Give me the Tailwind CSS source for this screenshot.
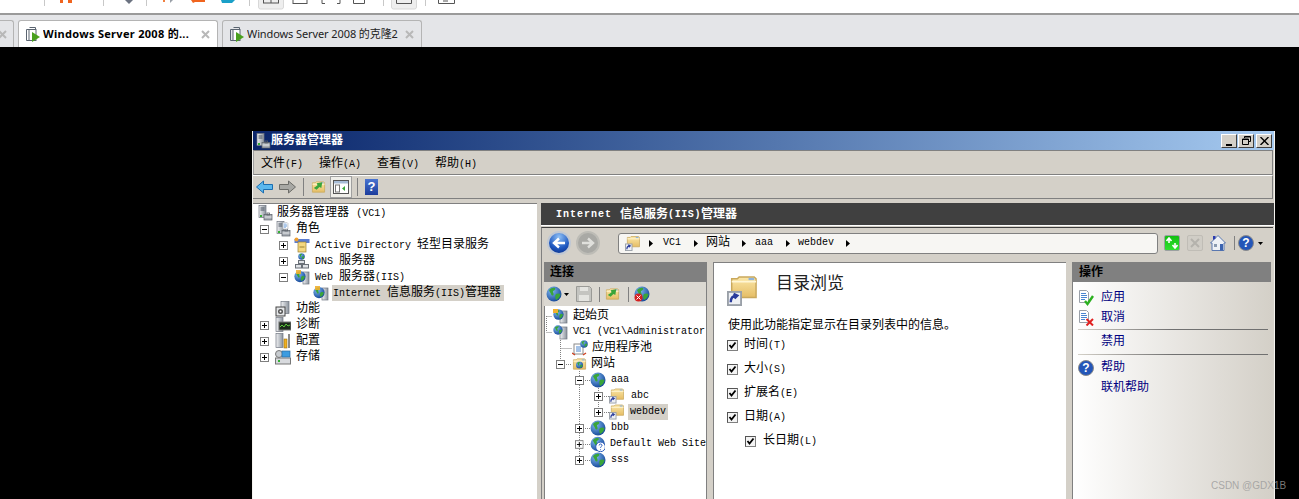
<!DOCTYPE html>
<html lang="zh-CN">
  <head>
    <meta charset="UTF-8" />
    <title>服务器管理器</title>
    <script src="https://cdn.jsdelivr.net/npm/@tailwindcss/browser@4"></script>
  </head>
  <body class="relative w-[1299px] h-[499px] overflow-hidden bg-black flex flex-col font-['Liberation_Mono','Noto_Sans_CJK_SC',monospace] text-[12px] leading-4 text-black">
    <!-- shared icons -->
    <svg class="absolute w-0 h-0" width="0" height="0">
      <defs>
        <linearGradient id="fold" x1="0" y1="0" x2="0" y2="1"><stop offset="0" stop-color="#fbe7a8" /><stop offset="1" stop-color="#e5bd65" /></linearGradient>
        <radialGradient id="ball" cx="0.35" cy="0.3" r="0.8"><stop offset="0" stop-color="#7fb8f0" /><stop offset="1" stop-color="#0d3f92" /></radialGradient>
        <linearGradient id="tower" x1="0" y1="0" x2="1" y2="0"><stop offset="0" stop-color="#f2f3f5" /><stop offset="1" stop-color="#8a929c" /></linearGradient>
      </defs>
      <symbol id="plus" viewBox="0 0 9 9"><rect x="0.5" y="0.5" width="8" height="8" fill="#fff" stroke="#7f7f7f" /><path d="M2 4.5h5M4.5 2v5" stroke="#000" /></symbol>
      <symbol id="minus" viewBox="0 0 9 9"><rect x="0.5" y="0.5" width="8" height="8" fill="#fff" stroke="#7f7f7f" /><path d="M2 4.5h5" stroke="#000" /></symbol>
      <symbol id="server" viewBox="0 0 16 16"><rect x="2" y="0.5" width="7" height="12" fill="url(#tower)" stroke="#6f7680" stroke-width="0.7" /><path d="M3.5 3h4M3.5 5h4" stroke="#4b5563" /><rect x="3" y="10" width="2" height="2" fill="#35b034" /><rect x="7" y="9.5" width="8" height="5.5" fill="#a8adb4" stroke="#5b6068" stroke-width="0.7" /><rect x="10" y="8" width="2.5" height="2" fill="none" stroke="#5b6068" stroke-width="0.8" /><path d="M7.5 12h7" stroke="#e8eaec" /></symbol>
      <symbol id="globe" viewBox="0 0 16 16"><circle cx="8" cy="8" r="7.5" fill="url(#ball)" /><path d="M3 4c2-2 4-2.500 6-2 1 1-.5 2.500-2 3-.5 1.500 1 2 .5 4-1 1-2 .5-2.500-1C4.500 6.500 3.500 6 3 4zM10 8c1.500-1 3.500-.5 4.500 0-.5 3-2 5-4.500 6-.5-1.500-1.500-4 0-6z" fill="#3aa53a" /></symbol>
      <symbol id="folder" viewBox="0 0 16 16"><path d="M1.500 3.500h3l1-1h8l1 1v10h-13z" fill="url(#fold)" stroke="#c9a85c" stroke-width="0.8" /><path d="M1.500 5h13" stroke="#fff6d4" /><rect x="10.500" y="3" width="3" height="1.200" fill="#8fb4dc" /></symbol>
      <symbol id="shortcut" viewBox="0 0 16 16"><use href="#folder" x="1" y="-2" width="16" height="16" /><rect x="0.500" y="8.500" width="7" height="7" fill="#eef0f4" stroke="#9aa0a8" /><path d="M2 14c0-2 1-3.500 3-3.500M3.500 9.500l2 1-1.500 1.500" fill="none" stroke="#2a3c9c" stroke-width="1.300" /></symbol>
      <symbol id="doc" viewBox="0 0 16 16"><path d="M1.500 .5h7l2 2v10h-9z" fill="#fff" stroke="#9aa0a8" /><path d="M3 3.500h5M3 5.500h6M3 7.500h6M3 9.500h4" stroke="#4a86d0" /></symbol>
    </svg>

    <!-- cropped workstation toolbar -->
    <svg class="block shrink-0" width="1299" height="15" viewBox="0 0 1299 15">
      <rect width="1299" height="15" fill="#fff" />
      <rect y="13" width="1299" height="2" fill="#9a9a9a" />
      <g fill="#c8c8c8"><rect x="44" width="1" height="6" /><rect x="103" width="1" height="6" /><rect x="146" width="1" height="6" /><rect x="249" width="1" height="6" /><rect x="383" width="1" height="6" /><rect x="425" width="1" height="6" /></g>
      <path d="M60 0h3v3h-3zM68 0h4v3h-4z" fill="#f0641e" />
      <path d="M125 0h8l-4 4z" fill="#6b7280" />
      <path d="M163 0h2v2h-2z" fill="#f08040" /><path d="M170 0v3l3-3z" fill="#9aa0a8" />
      <path d="M191 0h14v2h-10l-2 1z" fill="#f0641e" />
      <path d="M221 0l1 3h10l3-3z" fill="#1aa0c8" />
      <rect x="258.500" y="-4" width="25" height="13" rx="2" fill="#eeeeee" stroke="#d8d8d8" />
      <rect x="263.500" y="-3" width="15" height="6" fill="none" stroke="#555" /><path d="M271 0v3" stroke="#555" />
      <path d="M293 3.500h14M293 0v4M307 0v4" fill="none" stroke="#555" />
      <path d="M322 0v3.500h3M340 0v3.500h-3" fill="none" stroke="#555" />
      <path d="M353.500 0v3.500h11V0" fill="none" stroke="#555" />
      <rect x="391.500" y="-4" width="25" height="13" rx="2" fill="#eeeeee" stroke="#d8d8d8" />
      <path d="M396.500 0v3.500h15V0" fill="none" stroke="#555" />
      <path d="M438.500 0v3.500h16V0M443 1h5" fill="none" stroke="#555" />
    </svg>

    <!-- tab strip -->
    <div class="h-[32px] shrink-0 bg-[#e4e5e8] flex items-end font-['Noto_Sans','Noto_Sans_CJK_SC',sans-serif] text-[11px]">
      <div class="w-[14px] h-[27px] border border-l-0 border-b-0 border-[#b4b4b4] rounded-tr-[3px] flex items-center justify-start">
        <svg class="-ml-[2px] w-[9px] h-[9px]" viewBox="0 0 9 9"><path d="M1 1l7 7M8 1l-7 7" stroke="#b8b8b8" stroke-width="2" /></svg>
      </div>
      <div class="ml-[4px] w-[200px] h-[27px] bg-white border border-b-0 border-[#b4b4b4] rounded-t-[3px] flex items-center pl-[5px] font-bold">
        <svg class="w-4 h-4 shrink-0" viewBox="0 0 16 16"><path d="M5.500 1.500h6v2M2.500 3.500h6v11h-6z" fill="none" stroke="#5a6470" /><rect x="5" y="3.500" width="7" height="11" fill="#fff" stroke="#5a6470" /><path d="M8 6l8 5-8 5z" fill="#4aa01e" /></svg>
        <span class="ml-[3px] w-[157px] whitespace-nowrap overflow-hidden tracking-[0.3px]">Windows Server 2008 的...</span>
        <svg class="ml-[1px] w-[9px] h-[9px]" viewBox="0 0 9 9"><path d="M1 1l7 7M8 1l-7 7" stroke="#b8b8b8" stroke-width="2" /></svg>
      </div>
      <div class="ml-[4px] w-[200px] h-[27px] border border-b-0 border-[#b4b4b4] rounded-t-[3px] flex items-center pl-[5px] text-[#222]">
        <svg class="w-4 h-4 shrink-0" viewBox="0 0 16 16"><path d="M5.500 1.500h6v2M2.500 3.500h6v11h-6z" fill="none" stroke="#5a6470" /><rect x="5" y="3.500" width="7" height="11" fill="#fff" stroke="#5a6470" /><path d="M8 6l8 5-8 5z" fill="#4aa01e" /></svg>
        <span class="ml-[3px] w-[157px] whitespace-nowrap overflow-hidden tracking-[-0.1px]">Windows Server 2008 的克隆2</span>
        <svg class="ml-[1px] w-[9px] h-[9px]" viewBox="0 0 9 9"><path d="M1 1l7 7M8 1l-7 7" stroke="#b8b8b8" stroke-width="2" /></svg>
      </div>
    </div>

    <!-- guest desktop -->
    <div class="relative flex-1 bg-black">
      <div class="absolute left-[252px] top-[84px] w-[1023px] h-[368px] bg-[#d4d0c8] border-x border-x-[#f4f3ef] flex flex-col">
        <!-- title bar -->
        <div class="h-[19px] shrink-0 bg-gradient-to-r from-[#0a246a] to-[#a6caf0] flex items-center pl-[2px] pr-[2px]">
          <svg class="w-4 h-4"><use href="#server" /></svg>
          <span class="font-bold text-white pt-[1px]">服务器管理器</span>
          <div class="ml-auto flex gap-[1px]">
            <div class="w-4 h-[14px] bg-[#d4d0c8] border border-[#fff] border-r-[#404040] border-b-[#404040] flex items-end justify-center pb-[1px]"><div class="w-[6px] h-[2px] bg-black"></div></div>
            <div class="w-4 h-[14px] bg-[#d4d0c8] border border-[#fff] border-r-[#404040] border-b-[#404040] flex items-center justify-center">
              <svg class="w-[9px] h-[9px]" viewBox="0 0 9 9"><path d="M2.500 2V.5h6v5H7M.5 3h6v5.500h-6z" fill="none" stroke="#000" /><path d="M.5 3.500h6M2.500 1h6" stroke="#000" /></svg>
            </div>
            <div class="ml-[1px] w-4 h-[14px] bg-[#d4d0c8] border border-[#fff] border-r-[#404040] border-b-[#404040] flex items-center justify-center">
              <svg class="w-[9px] h-[8px]" viewBox="0 0 9 8"><path d="M.5 0l8 8M8.500 0l-8 8" stroke="#000" stroke-width="1.400" /></svg>
            </div>
          </div>
        </div>
        <!-- menu -->
        <div class="h-[25px] shrink-0 border border-[#808080] border-l-[#a0a0a0] flex items-center pl-[7px] pt-[3px] gap-[16px] mr-[1px] whitespace-nowrap">
          <span class="w-[42px]">文件<span class="text-[10px]">(F)</span></span>
          <span class="w-[42px]">操作<span class="text-[10px]">(A)</span></span>
          <span class="w-[42px]">查看<span class="text-[10px]">(V)</span></span>
          <span class="w-[42px]">帮助<span class="text-[10px]">(H)</span></span>
        </div>
        <!-- toolbar -->
        <div class="h-[24px] shrink-0 border-t border-t-white border-b border-b-[#808080] border-r border-r-[#808080] flex items-center pl-[3px] mr-[1px]">
          <svg class="w-[17px] h-[16px]" viewBox="0 0 17 16"><path d="M.5 8l7-6v3.500h9v5h-9V14z" fill="#5cb8ee" stroke="#1c6eb0" /></svg>
          <svg class="ml-[6px] w-[17px] h-[16px]" viewBox="0 0 17 16"><path d="M16.500 8l-7-6v3.500h-9v5h9V14z" fill="#a8a8a4" stroke="#6c6c68" /></svg>
          <div class="ml-[7px] w-[1px] h-[18px] bg-[#808080]"></div>
          <svg class="ml-[7px] w-[15px] h-[16px]" viewBox="0 0 16 16"><use href="#folder" /><path d="M3 9l4-3-1-2 6-1-1 6-2-1-3 3z" fill="#3aa53a" /></svg>
          <div class="ml-[4px] w-[22px] h-[22px] border border-[#a0a0a0] bg-[#efeee9] flex items-center justify-center">
            <svg class="w-4 h-[14px]" viewBox="0 0 16 14"><rect x=".5" y=".5" width="15" height="13" fill="#fff" stroke="#555" /><rect x="1" y="1" width="14" height="2.500" fill="#a7bcd6" /><rect x="2.500" y="5" width="4" height="7" fill="none" stroke="#777" /><path d="M12 6v5l-3-2.500z" fill="#3aa53a" /></svg>
          </div>
          <div class="ml-[5px] w-[1px] h-[18px] bg-[#808080]"></div>
          <div class="ml-[7px] w-[13px] h-[16px] bg-gradient-to-b from-[#4a74d0] to-[#1c3c9c] flex items-center justify-center text-white font-bold font-['Liberation_Sans',sans-serif] text-[13px]">?</div>
        </div>

        <div class="flex-1 min-h-0 flex pt-[4px]">
          <!-- server tree -->
          <div class="w-[284px] shrink-0 bg-white border-t border-t-[#808080] pt-[1px]">
            <div class="flex h-4 items-center pl-[4px]"><svg class="w-4 h-4"><use href="#server" /></svg><span class="ml-[4px]">服务器管理器 <span class="text-[10px]">(VC1)</span></span></div>
            <div class="flex h-4 items-center pl-[7px]"><svg class="w-[9px] h-[9px]"><use href="#minus" /></svg><svg class="ml-[6px] w-4 h-4" viewBox="0 0 16 16"><use href="#server" /><use href="#doc" x="7" y="1" width="9" height="9" /></svg><span class="ml-[5px]">角色</span></div>
            <div class="flex h-4 items-center pl-[26px]"><svg class="w-[9px] h-[9px]"><use href="#plus" /></svg><svg class="ml-[6px] w-4 h-4" viewBox="0 0 16 16"><rect x="0.500" y="2" width="15" height="4" fill="#5a7cd0" /><circle cx="2.500" cy="2.500" r="2" fill="#f0a030" /><rect x="4" y="5" width="8" height="10" fill="#f4d880" stroke="#9a8030" stroke-width=".7" /><path d="M5.500 10h5" stroke="#9a8030" /></svg><span class="ml-[5px]"><span class="text-[10px]">Active Directory </span>轻型目录服务</span></div>
            <div class="flex h-4 items-center pl-[26px]"><svg class="w-[9px] h-[9px]"><use href="#plus" /></svg><svg class="ml-[6px] w-4 h-4" viewBox="0 0 16 16"><use href="#globe" x="4" y="0" width="7" height="7" /><rect x="4.500" y="7.500" width="6" height="3" fill="#dfe2e6" stroke="#6a7078" /><rect x="1.500" y="11.500" width="6" height="3.500" fill="#dfe2e6" stroke="#6a7078" /><rect x="8.500" y="11.500" width="6" height="3.500" fill="#dfe2e6" stroke="#6a7078" /></svg><span class="ml-[5px]"><span class="text-[10px]">DNS </span>服务器</span></div>
            <div class="flex h-4 items-center pl-[26px]"><svg class="w-[9px] h-[9px]"><use href="#minus" /></svg><svg class="ml-[6px] w-4 h-4" viewBox="0 0 16 16"><rect x="9" y="3" width="6" height="12" fill="url(#tower)" stroke="#6f7680" stroke-width=".7" /><use href="#globe" x="0" y="1" width="12" height="13" /><rect x="2" y="1" width="5" height="4" fill="#f0b030" opacity=".9" /></svg><span class="ml-[5px]"><span class="text-[10px]">Web </span>服务器<span class="text-[10px]">(IIS)</span></span></div>
            <div class="flex h-4 items-center pl-[60px]"><svg class="w-4 h-4" viewBox="0 0 16 16"><rect x="9" y="3" width="6" height="12" fill="url(#tower)" stroke="#6f7680" stroke-width=".7" /><use href="#globe" x="0" y="1" width="12" height="13" /><rect x="2" y="1" width="5" height="4" fill="#f0b030" opacity=".9" /></svg><span class="ml-[3px] h-4 w-[172px] pl-[1px] bg-[#d4d0c8] whitespace-nowrap"><span class="text-[10px]">Internet </span>信息服务<span class="text-[10px]">(IIS)</span>管理器</span></div>
            <div class="flex h-4 items-center pl-[22px]"><svg class="w-4 h-4" viewBox="0 0 16 16"><rect x="6" y="0.500" width="8" height="12" fill="url(#tower)" stroke="#6f7680" stroke-width=".7" /><rect x="1" y="6" width="9" height="9" fill="#e4e6e8" stroke="#444" /><circle cx="5.500" cy="10.500" r="2.500" fill="#555" /><circle cx="5.500" cy="10.500" r="1" fill="#fff" /></svg><span class="ml-[5px]">功能</span></div>
            <div class="flex h-4 items-center pl-[7px]"><svg class="w-[9px] h-[9px]"><use href="#plus" /></svg><svg class="ml-[6px] w-4 h-4" viewBox="0 0 16 16"><rect x="1" y="0.500" width="7" height="14" fill="url(#tower)" stroke="#6f7680" stroke-width=".7" /><rect x="4" y="5" width="12" height="8" fill="#1c2a1c" stroke="#777" /><path d="M5 10l2-2 2 2 2-3 2 2 2-1" fill="none" stroke="#5ccc3c" /></svg><span class="ml-[5px]">诊断</span></div>
            <div class="flex h-4 items-center pl-[7px]"><svg class="w-[9px] h-[9px]"><use href="#plus" /></svg><svg class="ml-[6px] w-4 h-4" viewBox="0 0 16 16"><rect x="1" y="0.500" width="7" height="14" fill="url(#tower)" stroke="#6f7680" stroke-width=".7" /><rect x="9" y="6" width="3" height="9" fill="#f0b020" stroke="#9a7010" stroke-width=".6" /><path d="M14 1v14" stroke="#8a8a8a" stroke-width="2" /></svg><span class="ml-[5px]">配置</span></div>
            <div class="flex h-4 items-center pl-[7px]"><svg class="w-[9px] h-[9px]"><use href="#plus" /></svg><svg class="ml-[6px] w-4 h-4" viewBox="0 0 16 16"><rect x="0.500" y="9" width="15" height="6" fill="#d8dade" stroke="#777" /><circle cx="4" cy="5" r="3.500" fill="#c8ccd0" stroke="#777" /><rect x="7" y="2" width="8" height="6" fill="#3c9ce0" stroke="#2a6ca0" stroke-width=".7" /><rect x="3" y="11" width="2" height="2" fill="#35b034" /></svg><span class="ml-[5px]">存储</span></div>
          </div>

          <!-- splitter -->
          <div class="w-[4px] shrink-0"></div>

          <!-- IIS manager -->
          <div class="flex-1 min-w-0 flex flex-col">
            <div class="h-[22px] shrink-0 bg-[#404040] text-white font-bold flex items-center pl-[15px] pt-[2px] whitespace-nowrap">
              <span class="text-[10px] tracking-[1px]">Internet&nbsp;</span><span class="ml-[1px]">信息服务</span><span class="text-[10px] tracking-[0.6px]">(IIS)</span><span>管理器</span>
            </div>
            <div class="h-[1px] shrink-0 bg-white"></div>
            <div class="flex-1 min-h-0 flex flex-col border-t border-t-[#404040] border-l border-l-[#808080] mt-[1px] mr-[1px]">
              <!-- nav bar -->
              <div class="h-[34px] shrink-0 flex items-center pl-[5px] pb-[4px]">
                <div class="w-6 h-6 rounded-full border-2 border-[#c0c8d4] bg-[radial-gradient(circle_at_50%_20%,#8fc0f5,#1d57c0_60%,#0a2a80)] flex items-center justify-center">
                  <svg class="w-[14px] h-[12px]" viewBox="0 0 14 12"><path d="M13 6H3M7 1.500L2 6l5 4.500" fill="none" stroke="#fff" stroke-width="2.400" /></svg>
                </div>
                <div class="ml-[5px] w-6 h-6 rounded-full border-2 border-[#bdbcb6] bg-[#a9a9a5] flex items-center justify-center">
                  <svg class="w-[14px] h-[12px]" viewBox="0 0 14 12"><path d="M1 6h10M7 1.500L12 6l-5 4.500" fill="none" stroke="#e0e0dc" stroke-width="2.400" /></svg>
                </div>
                <div class="ml-[18px] w-[540px] h-[21px] rounded-[3px] border border-[#808080] bg-[#f7f6f3] flex items-center pl-[6px]">
                  <svg class="w-[15px] h-[15px]"><use href="#shortcut" /></svg>
                  <svg class="ml-[9px] w-[4px] h-[7px]" viewBox="0 0 4 7"><path d="M0 0l4 3.500L0 7z" /></svg>
                  <span class="ml-[10px] text-[10px] w-[18px]">VC1</span>
                  <svg class="ml-[13px] w-[4px] h-[7px]" viewBox="0 0 4 7"><path d="M0 0l4 3.500L0 7z" /></svg>
                  <span class="ml-[8px] w-[24px]">网站</span>
                  <svg class="ml-[12px] w-[4px] h-[7px]" viewBox="0 0 4 7"><path d="M0 0l4 3.500L0 7z" /></svg>
                  <span class="ml-[9px] text-[10px] w-[18px]">aaa</span>
                  <svg class="ml-[13px] w-[4px] h-[7px]" viewBox="0 0 4 7"><path d="M0 0l4 3.500L0 7z" /></svg>
                  <span class="ml-[8px] text-[10px] w-[36px]">webdev</span>
                  <svg class="ml-[12px] w-[4px] h-[7px]" viewBox="0 0 4 7"><path d="M0 0l4 3.500L0 7z" /></svg>
                </div>
                <div class="ml-[6px] w-4 h-4 rounded-[2px] border border-[#9aa0a0] bg-gradient-to-b from-[#10c010] to-[#30e030] flex items-center justify-center">
                  <svg class="w-3 h-3" viewBox="0 0 12 12"><path d="M3 1v5M0.500 4L3 1l2.500 3M9 11V6M6.500 8L9 11l2.500-3" fill="none" stroke="#fff" stroke-width="1.600" /></svg>
                </div>
                <div class="ml-[7px] w-4 h-4 rounded-[2px] border border-[#c0bdb6] bg-[#d0cdc6] flex items-center justify-center">
                  <svg class="w-[10px] h-[10px]" viewBox="0 0 10 10"><path d="M1 1l8 8M9 1l-8 8" stroke="#b4b2ac" stroke-width="2" /></svg>
                </div>
                <svg class="ml-[7px] w-4 h-4" viewBox="0 0 16 16"><path d="M8 .5L.5 8H2v7.500h12V8h1.500z" fill="#eef1f6" stroke="#5a78b0" /><path d="M3 1h2.500v2.500L3 5z" fill="#2a3cb0" /><rect x="4" y="9" width="3" height="3" fill="#8a9ab0" /><rect x="10" y="9" width="3" height="6.500" fill="#3c64b0" /></svg>
                <div class="ml-[8px] w-[1px] h-[14px] bg-[#808080]"></div>
                <div class="ml-[3px] w-4 h-4 rounded-full border border-[#8a8a8a] bg-[#2456b8] text-white text-center font-bold font-['Liberation_Sans',sans-serif] text-[12px] leading-[14px]">?</div>
                <svg class="ml-[4px] w-[5px] h-[3px]" viewBox="0 0 5 3"><path d="M0 0h5L2.500 3z" /></svg>
              </div>

              <div class="flex-1 min-h-0 flex pl-[2px]">
                <!-- connections -->
                <div class="w-[163px] shrink-0 flex flex-col">
                  <div class="h-[20px] shrink-0 bg-[#808080] font-bold flex items-center pl-[6px] pt-[2px]">连接</div>
                  <div class="h-[24px] shrink-0 bg-[#dbd8d1] border-r border-r-[#808080] flex items-center pl-[2px]">
                    <svg class="w-4 h-4"><use href="#globe" /></svg>
                    <svg class="ml-[2px] w-[5px] h-[3px]" viewBox="0 0 5 3"><path d="M0 0h5L2.500 3z" /></svg>
                    <svg class="ml-[7px] w-4 h-4" viewBox="0 0 16 16"><path d="M.5.5h13l2 2v13H.5z" fill="#c4c4c0" stroke="#9a9a96" /><rect x="4" y="1" width="8" height="4" fill="#e4e4e0" /><rect x="3" y="9" width="10" height="6" fill="#e4e4e0" /></svg>
                    <div class="ml-[7px] w-[1px] h-[15px] bg-[#808080]"></div>
                    <svg class="ml-[5px] w-[15px] h-4" viewBox="0 0 16 16"><use href="#folder" /><path d="M3 9l4-3-1-2 6-1-1 6-2-1-3 3z" fill="#3aa53a" /></svg>
                    <div class="ml-[8px] w-[1px] h-[15px] bg-[#808080]"></div>
                    <svg class="ml-[5px] w-4 h-4" viewBox="0 0 16 16"><use href="#globe" /><circle cx="4.500" cy="11.500" r="4" fill="#d42020" /><path d="M2.500 9.500l4 4M6.500 9.500l-4 4" stroke="#fff" /></svg>
                  </div>
                  <div class="relative flex-1 bg-white border-r border-r-[#808080] border-l border-l-[#808080] overflow-hidden whitespace-nowrap pt-[2px] pl-[1px]">
                    <!-- dotted connectors of the tree -->
                    <svg class="absolute left-[1px] top-[1px]" width="161" height="193" fill="none" stroke="#808080" stroke-dasharray="1 1">
                      <path d="M0.500 9.500h6M0.500 25.500h6M0.500 9v16M14.500 33v24M14.500 41.500h12M18 57.500h8M33.500 64v89M37 73.500h8M37 121.500h8M37 137.500h8M37 153.500h8M52.500 81v24M56 89.500h8M56 105.500h8" />
                    </svg>
                    <div class="relative flex h-4 items-center pl-[6px]"><svg class="w-4 h-4" viewBox="0 0 16 16"><rect x="8" y="3" width="7" height="12" fill="url(#tower)" stroke="#6f7680" stroke-width=".7" /><use href="#globe" x="1" y="1" width="11" height="11" /><rect x="1" y="1" width="5" height="4" fill="#f0b030" /></svg><span class="ml-[5px]">起始页</span></div>
                    <div class="relative flex h-4 items-center pl-[6px]"><svg class="w-4 h-4" viewBox="0 0 16 16"><rect x="8" y="3" width="7" height="12" fill="url(#tower)" stroke="#6f7680" stroke-width=".7" /><use href="#globe" x="1" y="1" width="10" height="10" /></svg><span class="ml-[5px] text-[10px]">VC1 (VC1\Administrator</span></div>
                    <div class="relative flex h-4 items-center pl-[26px]"><svg class="w-4 h-4" viewBox="0 0 16 16"><rect x="2" y="4" width="9" height="10" fill="#fff" stroke="#8a8a8a" /><path d="M4 7h5M4 9h5M4 11h5" stroke="#4a86d0" /><use href="#globe" x="8" y="0" width="8" height="8" /><path d="M0 13l3 2M14 13l-3 2" stroke="#d04020" stroke-width="1.400" /></svg><span class="ml-[4px]">应用程序池</span></div>
                    <div class="relative flex h-4 items-center pl-[10px]"><svg class="w-[9px] h-[9px]"><use href="#minus" /></svg><svg class="ml-[7px] w-[15px] h-4" viewBox="0 0 16 16"><use href="#folder" /><use href="#globe" x="4" y="5" width="8" height="8" /></svg><span class="ml-[4px]">网站</span></div>
                    <div class="relative flex h-4 items-center pl-[29px]"><svg class="w-[9px] h-[9px]"><use href="#minus" /></svg><svg class="ml-[6px] w-4 h-4"><use href="#globe" /></svg><span class="ml-[5px] text-[10px]">aaa</span></div>
                    <div class="relative flex h-4 items-center pl-[48px]"><svg class="w-[9px] h-[9px]"><use href="#plus" /></svg><svg class="ml-[6px] w-[15px] h-4"><use href="#shortcut" /></svg><span class="ml-[7px] text-[10px]">abc</span></div>
                    <div class="relative flex h-4 items-center pl-[48px]"><svg class="w-[9px] h-[9px]"><use href="#plus" /></svg><svg class="ml-[6px] w-[15px] h-4"><use href="#shortcut" /></svg><span class="ml-[4px] h-4 px-[2px] bg-[#d4d0c8] text-[10px]">webdev</span></div>
                    <div class="relative flex h-4 items-center pl-[29px]"><svg class="w-[9px] h-[9px]"><use href="#plus" /></svg><svg class="ml-[6px] w-4 h-4"><use href="#globe" /></svg><span class="ml-[5px] text-[10px]">bbb</span></div>
                    <div class="relative flex h-4 items-center pl-[29px]"><svg class="w-[9px] h-[9px]"><use href="#plus" /></svg><svg class="ml-[6px] w-4 h-4" viewBox="0 0 16 16"><use href="#globe" /><circle cx="11" cy="11" r="5" fill="#fff" stroke="#2456b8" /><path d="M9.500 9.500c0-2 3-2 3 0 0 1-1.500 1-1.500 2.500M11 13.500v1" fill="none" stroke="#2456b8" /></svg><span class="ml-[5px] text-[10px]">Default Web Site</span></div>
                    <div class="relative flex h-4 items-center pl-[29px]"><svg class="w-[9px] h-[9px]"><use href="#plus" /></svg><svg class="ml-[6px] w-4 h-4"><use href="#globe" /></svg><span class="ml-[5px] text-[10px]">sss</span></div>
                  </div>
                </div>

                <!-- feature page -->
                <div class="ml-[6px] w-[353px] shrink-0 bg-white border-t border-l border-[#808080]">
                  <div class="flex pl-[13px] pt-[12px] h-[53px]">
                    <svg class="w-[30px] h-[32px]" viewBox="0 0 16 16"><use href="#shortcut" /></svg>
                    <span class="ml-[19px] text-[17px] leading-[18px] pt-[1px] text-[#222]">目录浏览</span>
                  </div>
                  <p class="pl-[14px] h-[16px] mt-[2px]">使用此功能指定显示在目录列表中的信息。</p>
                  <div class="pl-[13px] -mt-[1px] flex flex-col">
                    <label class="h-6 flex items-center"><span class="w-[11px] h-[11px] border border-[#808080] border-t-[#555] border-l-[#555] bg-[#f4f4f4] flex items-center justify-center"><svg class="w-[9px] h-[9px]" viewBox="0 0 9 9"><path d="M1.500 4l2 2.500 4-5" fill="none" stroke="#000" stroke-width="1.800" /></svg></span><span class="ml-[6px]">时间<span class="text-[10px]">(T)</span></span></label>
                    <label class="h-6 flex items-center"><span class="w-[11px] h-[11px] border border-[#808080] border-t-[#555] border-l-[#555] bg-[#f4f4f4] flex items-center justify-center"><svg class="w-[9px] h-[9px]" viewBox="0 0 9 9"><path d="M1.500 4l2 2.500 4-5" fill="none" stroke="#000" stroke-width="1.800" /></svg></span><span class="ml-[6px]">大小<span class="text-[10px]">(S)</span></span></label>
                    <label class="h-6 flex items-center"><span class="w-[11px] h-[11px] border border-[#808080] border-t-[#555] border-l-[#555] bg-[#f4f4f4] flex items-center justify-center"><svg class="w-[9px] h-[9px]" viewBox="0 0 9 9"><path d="M1.500 4l2 2.500 4-5" fill="none" stroke="#000" stroke-width="1.800" /></svg></span><span class="ml-[6px]">扩展名<span class="text-[10px]">(E)</span></span></label>
                    <label class="h-6 flex items-center"><span class="w-[11px] h-[11px] border border-[#808080] border-t-[#555] border-l-[#555] bg-[#f4f4f4] flex items-center justify-center"><svg class="w-[9px] h-[9px]" viewBox="0 0 9 9"><path d="M1.500 4l2 2.500 4-5" fill="none" stroke="#000" stroke-width="1.800" /></svg></span><span class="ml-[6px]">日期<span class="text-[10px]">(A)</span></span></label>
                    <label class="h-6 flex items-center pl-[18px]"><span class="w-[11px] h-[11px] border border-[#808080] border-t-[#555] border-l-[#555] bg-[#f4f4f4] flex items-center justify-center"><svg class="w-[9px] h-[9px]" viewBox="0 0 9 9"><path d="M1.500 4l2 2.500 4-5" fill="none" stroke="#000" stroke-width="1.800" /></svg></span><span class="ml-[7px]">长日期<span class="text-[10px]">(L)</span></span></label>
                  </div>
                </div>

                <!-- actions -->
                <div class="ml-[6px] w-[199px] shrink-0 flex flex-col">
                  <div class="h-[20px] shrink-0 bg-[#808080] font-bold flex items-center pl-[7px] pt-[2px]">操作</div>
                  <div class="flex-1 bg-gradient-to-r from-white to-[#d4d0c8] border-l border-l-[#808080] text-[#000080] pl-[5px] pt-[6px]">
                    <div class="h-[20px] flex items-center"><svg class="w-4 h-4" viewBox="0 0 16 16"><use href="#doc" /><path d="M7 11l2.500 3L15 6" fill="none" stroke="#2cb020" stroke-width="2.400" /></svg><span class="ml-[7px]">应用</span></div>
                    <div class="h-[19px] flex items-center"><svg class="w-4 h-4" viewBox="0 0 16 16"><use href="#doc" /><path d="M8.500 9l6.500 6.500M15 9l-6.500 6.500" stroke="#e02020" stroke-width="2" /></svg><span class="ml-[7px]">取消</span></div>
                    <div class="h-[1px] w-[190px] mt-[2px] bg-gradient-to-r from-[#d4d0c8] via-[#707070] to-[#707070]"></div>
                    <div class="h-[24px] flex items-center pl-[23px]">禁用</div>
                    <div class="h-[1px] w-[190px] bg-gradient-to-r from-[#d4d0c8] via-[#707070] to-[#707070]"></div>
                    <div class="h-[25px] flex items-center"><div class="w-4 h-4 rounded-full border border-[#8a8a8a] bg-[#2456b8] text-white text-center font-bold font-['Liberation_Sans',sans-serif] text-[12px] leading-[14px]">?</div><span class="ml-[7px]">帮助</span></div>
                    <div class="h-[16px] flex items-center pl-[23px]">联机帮助</div>
                  </div>
                </div>
              </div>
            </div>
          </div>
        </div>
      </div>
      <!-- watermark -->
      <span class="absolute left-[1211px] top-[432px] font-['Liberation_Sans',sans-serif] text-[10px] leading-[14px] text-[#9a9a9a]/80 whitespace-nowrap">CSDN @GDX1B</span>
    </div>
  </body>
</html>
